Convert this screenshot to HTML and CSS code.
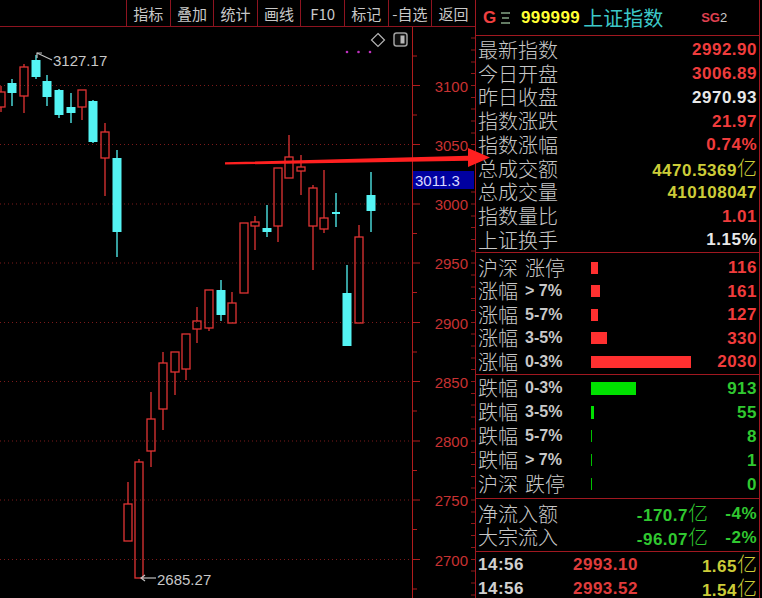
FILE: index.html
```html
<!DOCTYPE html>
<html lang="zh-CN">
<head>
<meta charset="utf-8">
<title>上证指数</title>
<link rel="stylesheet" href="styles.css">
</head>
<body>
<div class="app">
  <div class="left">
    <div class="toolbar">
      <div class="tb-space"></div>
      <div class="tb-btn">指标</div>
      <div class="tb-btn">叠加</div>
      <div class="tb-btn">统计</div>
      <div class="tb-btn">画线</div>
      <div class="tb-btn">F10</div>
      <div class="tb-btn">标记</div>
      <div class="tb-btn">-自选</div>
      <div class="tb-btn">返回</div>
    </div>
    <svg class="chart" width="475" height="571" viewBox="0 27 475 571">
      <g class="grid">
        <line x1="0" y1="85.5" x2="412" y2="85.5"/>
        <line x1="0" y1="144.5" x2="412" y2="144.5"/>
        <line x1="0" y1="204" x2="412" y2="204"/>
        <line x1="0" y1="263" x2="412" y2="263"/>
        <line x1="0" y1="322.5" x2="412" y2="322.5"/>
        <line x1="0" y1="381.5" x2="412" y2="381.5"/>
        <line x1="0" y1="441" x2="412" y2="441"/>
        <line x1="0" y1="500" x2="412" y2="500"/>
        <line x1="0" y1="559.5" x2="412" y2="559.5"/>
      </g>
      <g class="axis">
        <line x1="412.5" y1="27" x2="412.5" y2="598"/>
        <line x1="412" y1="85.5" x2="420" y2="85.5"/>
        <line x1="412" y1="144.5" x2="420" y2="144.5"/>
        <line x1="412" y1="204" x2="420" y2="204"/>
        <line x1="412" y1="263" x2="420" y2="263"/>
        <line x1="412" y1="322.5" x2="420" y2="322.5"/>
        <line x1="412" y1="381.5" x2="420" y2="381.5"/>
        <line x1="412" y1="441" x2="420" y2="441"/>
        <line x1="412" y1="500" x2="420" y2="500"/>
        <line x1="412" y1="559.5" x2="420" y2="559.5"/>
        <line x1="412" y1="56" x2="417" y2="56"/>
        <line x1="412" y1="115" x2="417" y2="115"/>
        <line x1="412" y1="174" x2="417" y2="174"/>
        <line x1="412" y1="233.5" x2="417" y2="233.5"/>
        <line x1="412" y1="292.5" x2="417" y2="292.5"/>
        <line x1="412" y1="352" x2="417" y2="352"/>
        <line x1="412" y1="411" x2="417" y2="411"/>
        <line x1="412" y1="470.5" x2="417" y2="470.5"/>
        <line x1="412" y1="529.5" x2="417" y2="529.5"/>
        <line x1="412" y1="589" x2="417" y2="589"/>
      </g>
      <g class="edge-ticks">
        <line x1="471" y1="38" x2="475" y2="38"/>
        <line x1="471" y1="50" x2="475" y2="50"/>
        <line x1="471" y1="62" x2="475" y2="62"/>
        <line x1="471" y1="73.5" x2="475" y2="73.5"/>
        <line x1="471" y1="85.5" x2="475" y2="85.5"/>
        <line x1="471" y1="97.5" x2="475" y2="97.5"/>
        <line x1="471" y1="109" x2="475" y2="109"/>
        <line x1="471" y1="121" x2="475" y2="121"/>
        <line x1="471" y1="133" x2="475" y2="133"/>
        <line x1="471" y1="144.5" x2="475" y2="144.5"/>
        <line x1="471" y1="156.5" x2="475" y2="156.5"/>
        <line x1="471" y1="192" x2="475" y2="192"/>
        <line x1="471" y1="204" x2="475" y2="204"/>
        <line x1="471" y1="216" x2="475" y2="216"/>
        <line x1="471" y1="227.5" x2="475" y2="227.5"/>
        <line x1="471" y1="239.5" x2="475" y2="239.5"/>
        <line x1="471" y1="251" x2="475" y2="251"/>
        <line x1="471" y1="263" x2="475" y2="263"/>
        <line x1="471" y1="275" x2="475" y2="275"/>
        <line x1="471" y1="287" x2="475" y2="287"/>
        <line x1="471" y1="298.5" x2="475" y2="298.5"/>
        <line x1="471" y1="310.5" x2="475" y2="310.5"/>
        <line x1="471" y1="322.5" x2="475" y2="322.5"/>
        <line x1="471" y1="334" x2="475" y2="334"/>
        <line x1="471" y1="346" x2="475" y2="346"/>
        <line x1="471" y1="358" x2="475" y2="358"/>
        <line x1="471" y1="369.5" x2="475" y2="369.5"/>
        <line x1="471" y1="381.5" x2="475" y2="381.5"/>
        <line x1="471" y1="393.5" x2="475" y2="393.5"/>
        <line x1="471" y1="405" x2="475" y2="405"/>
        <line x1="471" y1="417" x2="475" y2="417"/>
        <line x1="471" y1="429" x2="475" y2="429"/>
        <line x1="471" y1="441" x2="475" y2="441"/>
        <line x1="471" y1="452.5" x2="475" y2="452.5"/>
        <line x1="471" y1="464.5" x2="475" y2="464.5"/>
        <line x1="471" y1="476.5" x2="475" y2="476.5"/>
        <line x1="471" y1="488" x2="475" y2="488"/>
        <line x1="471" y1="500" x2="475" y2="500"/>
        <line x1="471" y1="512" x2="475" y2="512"/>
        <line x1="471" y1="523.5" x2="475" y2="523.5"/>
        <line x1="471" y1="535.5" x2="475" y2="535.5"/>
        <line x1="471" y1="547.5" x2="475" y2="547.5"/>
        <line x1="471" y1="559.5" x2="475" y2="559.5"/>
        <line x1="471" y1="571" x2="475" y2="571"/>
        <line x1="471" y1="583" x2="475" y2="583"/>
        <line x1="471" y1="595" x2="475" y2="595"/>
      </g>
      <g class="axis-labels">
        <text x="468" y="86">3100</text>
        <text x="468" y="145">3050</text>
        <text x="468" y="204.5">3000</text>
        <text x="468" y="263.5">2950</text>
        <text x="468" y="323">2900</text>
        <text x="468" y="382">2850</text>
        <text x="468" y="441.5">2800</text>
        <text x="468" y="500.5">2750</text>
        <text x="468" y="560">2700</text>
      </g>
      <rect class="cur-box" x="413" y="171" width="61" height="18"/>
      <text class="cur-text" x="415" y="180.5">3011.3</text>

      <g class="wr">
        <line x1="1" y1="86" x2="1" y2="92"/><line x1="1" y1="107" x2="1" y2="112"/>
        <line x1="24" y1="64" x2="24" y2="67"/><line x1="24" y1="96" x2="24" y2="113"/>
        <line x1="82" y1="107" x2="82" y2="120"/>
        <line x1="105" y1="123" x2="105" y2="132"/><line x1="105" y1="158" x2="105" y2="196"/>
        <line x1="128" y1="482" x2="128" y2="504"/>
        <line x1="139" y1="459" x2="139" y2="462"/>
        <line x1="151" y1="392" x2="151" y2="419"/><line x1="151" y1="451" x2="151" y2="467"/>
        <line x1="163" y1="352" x2="163" y2="363"/><line x1="163" y1="409" x2="163" y2="430"/>
        <line x1="175" y1="372" x2="175" y2="395"/>
        <line x1="186" y1="369" x2="186" y2="380"/>
        <line x1="197" y1="307" x2="197" y2="321"/><line x1="197" y1="329" x2="197" y2="343"/>
        <line x1="209" y1="328" x2="209" y2="331"/>
        <line x1="232" y1="292" x2="232" y2="303"/>
        <line x1="255" y1="216" x2="255" y2="222"/><line x1="255" y1="226" x2="255" y2="250"/>
        <line x1="278" y1="226" x2="278" y2="242"/>
        <line x1="289" y1="135" x2="289" y2="157"/>
        <line x1="301" y1="155" x2="301" y2="167"/><line x1="301" y1="171" x2="301" y2="195"/>
        <line x1="313" y1="185" x2="313" y2="188"/><line x1="313" y1="226" x2="313" y2="270"/>
        <line x1="324" y1="170" x2="324" y2="218"/><line x1="324" y1="229" x2="324" y2="233"/>
        <line x1="359" y1="225" x2="359" y2="237"/>
      </g>
      <g class="r">
        <rect x="-3" y="92" width="8" height="15"/>
        <rect x="20" y="67" width="8" height="29"/>
        <rect x="78" y="90" width="8" height="17"/>
        <rect x="101" y="132" width="8" height="26"/>
        <rect x="124" y="504" width="8" height="37"/>
        <rect x="135" y="462" width="8" height="116"/>
        <rect x="147" y="419" width="8" height="32"/>
        <rect x="159" y="363" width="8" height="46"/>
        <rect x="171" y="352" width="8" height="20"/>
        <rect x="182" y="334" width="8" height="35"/>
        <rect x="193" y="321" width="8" height="8"/>
        <rect x="205" y="290" width="8" height="38"/>
        <rect x="228" y="303" width="8" height="20"/>
        <rect x="240" y="223" width="8" height="70"/>
        <rect x="251" y="222" width="8" height="4"/>
        <rect x="274" y="168" width="8" height="58"/>
        <rect x="285" y="157" width="8" height="21"/>
        <rect x="297" y="167" width="8" height="4"/>
        <rect x="309" y="188" width="8" height="38"/>
        <rect x="320" y="218" width="8" height="11"/>
        <rect x="355" y="237" width="8" height="86"/>
      </g>
      <g class="wc">
        <line x1="12" y1="79" x2="12" y2="106"/>
        <line x1="36" y1="55" x2="36" y2="79"/>
        <line x1="47" y1="75" x2="47" y2="106"/>
        <line x1="59" y1="89" x2="59" y2="118"/>
        <line x1="71" y1="93" x2="71" y2="123"/>
        <line x1="93" y1="100" x2="93" y2="143"/>
        <line x1="117" y1="150" x2="117" y2="257"/>
        <line x1="221" y1="280" x2="221" y2="321"/>
        <line x1="267" y1="205" x2="267" y2="237"/>
        <line x1="336" y1="193" x2="336" y2="227"/>
        <line x1="347" y1="265" x2="347" y2="346"/>
        <line x1="371" y1="172" x2="371" y2="232"/>
      </g>
      <g class="c">
        <rect x="7.5" y="83" width="9" height="10"/>
        <rect x="31.5" y="60" width="9" height="17"/>
        <rect x="42.5" y="81" width="9" height="16"/>
        <rect x="54.5" y="90" width="9" height="25"/>
        <rect x="66.5" y="107" width="9" height="6"/>
        <rect x="88.5" y="101" width="9" height="41"/>
        <rect x="112.5" y="158" width="9" height="74"/>
        <rect x="216.5" y="290" width="9" height="25"/>
        <rect x="262.5" y="228" width="9" height="4"/>
        <rect x="332" y="212" width="8" height="2"/>
        <rect x="342.5" y="293" width="9" height="53"/>
        <rect x="366.5" y="195" width="9" height="16"/>
      </g>

      <g class="mark">
        <polyline points="37,58 37,53 42,53"/>
        <line x1="37" y1="53" x2="52" y2="60"/>
        <line x1="141" y1="578" x2="156" y2="578"/>
        <polyline points="145,575 141,578 145,581"/>
      </g>
      <text class="extreme" x="53" y="60.5">3127.17</text>
      <text class="extreme" x="157" y="579">2685.27</text>

      <g class="dots">
        <circle cx="347" cy="52" r="1.3"/>
        <circle cx="358.5" cy="52" r="1.3"/>
        <circle cx="370" cy="52" r="1.3"/>
      </g>
      <polygon class="diamond" points="378,33.5 384.5,40 378,46.5 371.5,40"/>
      <rect class="tog" x="394" y="33" width="13" height="13" rx="2.5"/>
      <rect class="tog-in" x="400.5" y="35.5" width="4" height="8"/>
    </svg>
  </div>

  <div class="panel">
    <div class="head">
      <span class="g">G</span>
      <svg class="menu" width="9" height="12" viewBox="0 0 9 12">
        <line x1="0" y1="1" x2="9" y2="1"/>
        <line x1="1" y1="6" x2="8" y2="6"/>
        <line x1="0" y1="11" x2="9" y2="11"/>
      </svg>
      <span class="code">999999</span>
      <span class="name">上证指数</span>
      <span class="sg"><b>SG</b>2</span>
    </div>

    <div class="sec s1">
      <div class="row"><span class="lbl">最新指数</span><span class="val red">2992.90</span></div>
      <div class="row"><span class="lbl">今日开盘</span><span class="val red">3006.89</span></div>
      <div class="row"><span class="lbl">昨日收盘</span><span class="val white">2970.93</span></div>
      <div class="row"><span class="lbl">指数涨跌</span><span class="val red">21.97</span></div>
      <div class="row"><span class="lbl">指数涨幅</span><span class="val red">0.74%</span></div>
      <div class="row"><span class="lbl">总成交额</span><span class="val yellow">4470.5369<span class="cjk">亿</span></span></div>
      <div class="row"><span class="lbl">总成交量</span><span class="val yellow">410108047</span></div>
      <div class="row"><span class="lbl">指数量比</span><span class="val red">1.01</span></div>
      <div class="row"><span class="lbl">上证换手</span><span class="val white">1.15%</span></div>
    </div>

    <div class="sec s2">
      <div class="row"><span class="lbl">沪深<span class="gap"></span>涨停</span><span class="barbox"><span class="bar up" style="width:7px"></span></span><span class="val red">116</span></div>
      <div class="row"><span class="lbl">涨幅<span class="sub">&gt; 7%</span></span><span class="barbox"><span class="bar up" style="width:9px"></span></span><span class="val red">161</span></div>
      <div class="row"><span class="lbl">涨幅<span class="sub">5-7%</span></span><span class="barbox"><span class="bar up" style="width:7px"></span></span><span class="val red">127</span></div>
      <div class="row"><span class="lbl">涨幅<span class="sub">3-5%</span></span><span class="barbox"><span class="bar up" style="width:16px"></span></span><span class="val red">330</span></div>
      <div class="row"><span class="lbl">涨幅<span class="sub">0-3%</span></span><span class="barbox"><span class="bar up" style="width:100px"></span></span><span class="val red">2030</span></div>
    </div>

    <div class="sec s3">
      <div class="row"><span class="lbl">跌幅<span class="sub">0-3%</span></span><span class="barbox"><span class="bar dn" style="width:45px"></span></span><span class="val green">913</span></div>
      <div class="row"><span class="lbl">跌幅<span class="sub">3-5%</span></span><span class="barbox"><span class="bar dn" style="width:3px"></span></span><span class="val green">55</span></div>
      <div class="row"><span class="lbl">跌幅<span class="sub">5-7%</span></span><span class="barbox"><span class="bar dn thin" style="width:1px"></span></span><span class="val green">8</span></div>
      <div class="row"><span class="lbl">跌幅<span class="sub">&gt; 7%</span></span><span class="barbox"><span class="bar dn thin" style="width:1px"></span></span><span class="val green">1</span></div>
      <div class="row"><span class="lbl">沪深<span class="gap"></span>跌停</span><span class="barbox"><span class="bar dn thin" style="width:1px"></span></span><span class="val green">0</span></div>
    </div>

    <div class="sec s4">
      <div class="row flow"><span class="lbl">净流入额</span><span class="val green">-170.7<span class="cjk">亿</span></span><span class="val green">-4%</span></div>
      <div class="row flow"><span class="lbl">大宗流入</span><span class="val green">-96.07<span class="cjk">亿</span></span><span class="val green">-2%</span></div>
    </div>

    <div class="sec s5">
      <div class="row tick"><span class="val time">14:56</span><span class="val red2">2993.10</span><span class="val yellow">1.65<span class="cjk">亿</span></span></div>
      <div class="row tick"><span class="val time">14:56</span><span class="val red2">2993.52</span><span class="val yellow">1.54<span class="cjk">亿</span></span></div>
    </div>
  </div>

  <svg class="arrow" width="762" height="598" viewBox="0 0 762 598">
    <polygon points="225,162.2 468,155.8 468,148 490,157.5 468,167 468,160.8 225,164.6"/>
  </svg>
</div>
</body>
</html>
```

FILE: styles.css
```css
html, body {
  margin: 0;
  padding: 0;
  background: #000;
  overflow: hidden;
}

.app {
  position: relative;
  display: flex;
  width: 762px;
  height: 598px;
  overflow: hidden;
  background: #000;
}

/* ---------- left: toolbar + chart ---------- */
.left {
  width: 475px;
  flex: none;
  display: flex;
  flex-direction: column;
}

.toolbar {
  height: 26px;
  display: flex;
  border-bottom: 1px solid #8e1420;
}

.tb-space {
  width: 126px;
  flex: none;
}

.tb-btn {
  width: 43.6px;
  flex: none;
  box-sizing: border-box;
  border-left: 1px solid #8e1420;
  display: flex;
  align-items: center;
  justify-content: center;
  color: #c8c8c8;
  font-family: "Noto Sans CJK SC", "Liberation Sans", sans-serif;
  font-size: 15px;
  line-height: 1;
  padding-top: 1px;
}

.chart {
  display: block;
}

.grid line {
  stroke: #7c1a1a;
  stroke-width: 1;
  stroke-dasharray: 1 3;
}

.axis line {
  stroke: #b01c1c;
  stroke-width: 1;
}

.edge-ticks line {
  stroke: #901818;
  stroke-width: 1;
}

.axis-labels text {
  fill: #c83232;
  font-family: "Liberation Sans", Arial, sans-serif;
  font-size: 15px;
  text-anchor: end;
  dominant-baseline: central;
}

.cur-box {
  fill: #0000a0;
}

.cur-text {
  fill: #d8d8ff;
  font-family: "Liberation Sans", Arial, sans-serif;
  font-size: 15px;
  dominant-baseline: central;
}

.wr line {
  stroke: #e03434;
  stroke-width: 1.3;
}

.r rect {
  fill: none;
  stroke: #e03434;
  stroke-width: 1.3;
}

.wc line {
  stroke: #54f4f4;
  stroke-width: 1.3;
}

.c rect {
  fill: #54f4f4;
}

.mark line,
.mark polyline {
  stroke: #c0c0c0;
  stroke-width: 1.2;
  fill: none;
}

.extreme {
  fill: #c8c8c8;
  font-family: "Liberation Sans", Arial, sans-serif;
  font-size: 15px;
  dominant-baseline: central;
}

.dots circle {
  fill: #c030c0;
}

.diamond {
  fill: none;
  stroke: #b4b4b4;
  stroke-width: 1.2;
}

.tog {
  fill: #101010;
  stroke: #a0a0a0;
  stroke-width: 1.5;
}

.tog-in {
  fill: #b8b8b8;
}

/* ---------- right panel ---------- */
.panel {
  width: 285px;
  flex: none;
  box-sizing: border-box;
  border-left: 1px solid #a01820;
  border-right: 1px solid #a01820;
  display: flex;
  flex-direction: column;
  padding: 0 2px;
}

.head {
  height: 35px;
  flex: none;
  display: flex;
  align-items: center;
  border-bottom: 1px solid #a01820;
  margin: 0 -2px;
  padding-left: 7px;
}

.head .g {
  color: #f04040;
  font-family: "Liberation Sans", Arial, sans-serif;
  font-weight: bold;
  font-size: 17px;
  width: 18px;
}

.head .menu {
  margin-right: 11px;
}

.head .menu line {
  stroke: #8fb08f;
  stroke-width: 1.4;
}

.head .code {
  color: #ffff33;
  font-family: "Liberation Sans", Arial, sans-serif;
  font-weight: bold;
  font-size: 17px;
  letter-spacing: 0.4px;
  margin-right: 3px;
}

.head .name {
  color: #3cc8c8;
  font-family: "Noto Sans CJK SC", sans-serif;
  font-size: 20px;
  line-height: 1;
}

.head .sg {
  margin-left: 38px;
  color: #c8c8c8;
  font-family: "Liberation Sans", Arial, sans-serif;
  font-size: 13px;
}

.head .sg b {
  color: #e04050;
}

.sec {
  flex: none;
  display: flex;
  flex-direction: column;
  border-bottom: 1px solid #a01820;
  margin: 0 -2px;
  padding-left: 2px;
  padding-right: 2px;
}

.s1 { padding-top: 2px; }
.s1 .row { height: 23.75px; }

.s2 { padding-top: 3px; }
.s2 .row { height: 23.6px; }

.s3 { padding-top: 1.5px; padding-bottom: 2px; }
.s3 .row { height: 24px; }

.s4 { padding-top: 3px; padding-bottom: 2px; }
.s4 .row { height: 23.5px; }

.s5 { border-bottom: none; }
.s5 .row { height: 24px; }

.row {
  display: flex;
  align-items: center;
  flex: none;
}

.lbl {
  color: #c8c8c8;
  font-family: "Noto Sans CJK SC", sans-serif;
  font-weight: 300;
  font-size: 20px;
  line-height: 1;
  white-space: nowrap;
  display: flex;
  align-items: center;
}

.s2 .lbl,
.s3 .lbl {
  width: 113px;
  flex: none;
}

.gap {
  display: inline-block;
  width: 7px;
}

.sub {
  font-family: "Liberation Sans", Arial, sans-serif;
  font-weight: bold;
  font-size: 16px;
  margin-left: 7px;
  color: #c8c8c8;
}

.barbox {
  flex: 1;
  display: flex;
  align-items: center;
}

.bar {
  display: block;
  height: 12px;
}

.bar.up { background: #ff3030; }
.bar.dn { background: #00e000; height: 13px; }
.bar.dn.thin { height: 12px; background: #00c000; }

.val {
  margin-left: auto;
  font-family: "Liberation Sans", Arial, sans-serif;
  font-weight: bold;
  font-size: 17px;
  letter-spacing: 0.5px;
  line-height: 1;
  white-space: nowrap;
}

.val .cjk {
  font-family: "Noto Sans CJK SC", sans-serif;
  font-weight: 300;
  font-size: 20px;
  letter-spacing: 0;
}

.red { color: #f03c3c; }
.red2 { color: #e03c3c; }
.white { color: #e8e8e8; }
.yellow { color: #cccc38; }
.green { color: #30c830; }
.time { color: #d0d0d0; }

.flow .val:nth-child(2) {
  margin-left: auto;
}

.flow .val:nth-child(3) {
  width: 49px;
  text-align: right;
  margin-left: 0;
}

.tick .time {
  margin-left: 0;
  width: 95px;
}

.tick .red2 {
  margin-left: 0;
}

/* overlay annotation arrow */
.arrow {
  position: absolute;
  left: 0;
  top: 0;
  pointer-events: none;
}

.arrow polygon {
  fill: #ff2020;
}
```
